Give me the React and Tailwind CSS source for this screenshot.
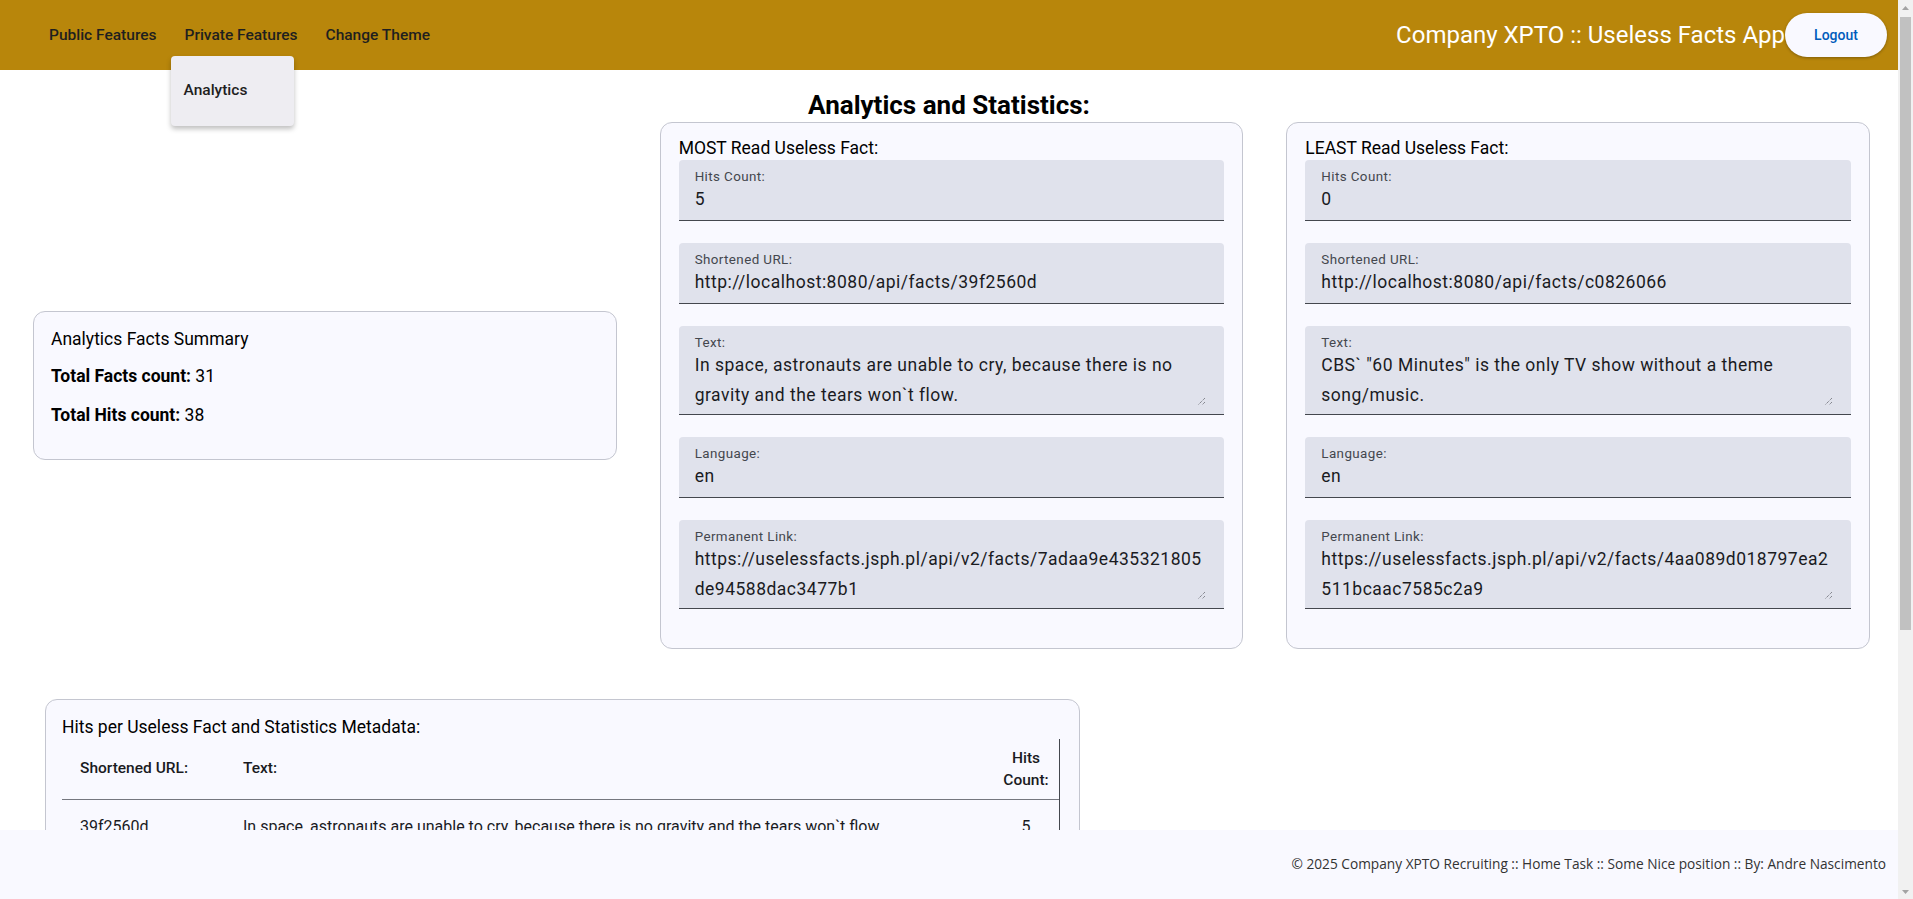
import React from 'react';

const mostRead = {
  hits: '5',
  url: 'http://localhost:8080/api/facts/39f2560d',
  text: ['In space, astronauts are unable to cry, because there is no', 'gravity and the tears won`t flow.'],
  language: 'en',
  link: ['https://uselessfacts.jsph.pl/api/v2/facts/7adaa9e435321805', 'de94588dac3477b1'],
};

const leastRead = {
  hits: '0',
  url: 'http://localhost:8080/api/facts/c0826066',
  text: ['CBS` "60 Minutes" is the only TV show without a theme', 'song/music.'],
  language: 'en',
  link: ['https://uselessfacts.jsph.pl/api/v2/facts/4aa089d018797ea2', '511bcaac7585c2a9'],
};

const rows = [
  { id: '39f2560d', text: 'In space, astronauts are unable to cry, because there is no gravity and the tears won`t flow.', hits: 5 },
  { id: 'c0826066', text: 'CBS` "60 Minutes" is the only TV show without a theme song/music.', hits: 0 },
];

// small diagonal grip drawn by textareas
const ResizeGrip = () => (
  <svg className="absolute bottom-[8px] right-[18px]" width="9" height="9" viewBox="0 0 9 9">
    <path d="M8 1 L1 8 M8 5 L5 8" stroke="#5f6068" strokeWidth="1" strokeDasharray="1 1" />
  </svg>
);

const Field = ({ label, lines, multiline }) => (
  <div className="mb-[22px]">
    <div
      className={`relative overflow-hidden rounded-t-[4px] bg-[#e0e2ec] border-b border-[#44474e] px-4 ${
        multiline ? 'h-[89px]' : 'h-[61px]'
      }`}
    >
      <div className="mt-[9px] text-[13.4px] leading-[16px] tracking-[0.4px] text-[#44474e]">{label}</div>
      {multiline ? (
        <div className="-mt-[1px] text-[17.5px] leading-[30px] tracking-[0.5px] text-[#1a1b1f]">
          {lines.map((l) => (
            <div key={l} className="whitespace-nowrap">{l}</div>
          ))}
        </div>
      ) : (
        <div className="mt-[2px] text-[17.5px] leading-[24px] tracking-[0.5px] text-[#1a1b1f] whitespace-nowrap">{lines}</div>
      )}
      {multiline && <ResizeGrip />}
    </div>
  </div>
);

const FactCard = ({ title, fact }) => (
  <div className="border border-[#c4c6d0] rounded-[12px] bg-[#f9f9ff] pt-[13px] px-[18px] pb-[17px]">
    <div className="text-[17.5px] leading-6 text-black">{title}</div>
    <Field label="Hits Count:" lines={fact.hits} />
    <Field label="Shortened URL:" lines={fact.url} />
    <Field label="Text:" lines={fact.text} multiline />
    <Field label="Language:" lines={fact.language} />
    <Field label="Permanent Link:" lines={fact.link} multiline />
  </div>
);

const Scrollbar = () => (
  <div className="w-[15px] h-full shrink-0 bg-[#f1f1f1] flex flex-col items-center">
    <div className="h-[15px] w-full flex items-center justify-center">
      <svg width="7" height="4" viewBox="0 0 7 4"><path d="M0 4 L3.5 0 L7 4 Z" fill="#a3a3a3" /></svg>
    </div>
    <div className="w-[11px] h-[613px] mt-[2px] bg-[#c1c1c1]" />
    <div className="flex-1" />
    <div className="h-[15px] w-full flex items-center justify-center">
      <svg width="7" height="4" viewBox="0 0 7 4"><path d="M0 0 L3.5 4 L7 0 Z" fill="#a3a3a3" /></svg>
    </div>
  </div>
);

export default function App() {
  return (
    <div className="flex h-screen w-full overflow-hidden bg-white" style={{ fontFamily: 'Roboto, "Liberation Sans", sans-serif' }}>
      <div className="flex-1 min-w-0 flex flex-col">
        {/* Toolbar */}
        <header className="relative z-10 h-[70px] shrink-0 bg-[#b8860b] flex items-center pl-[35px] pr-[11px]">
          <nav className="mt-[2px] flex items-center text-[15.5px] font-medium text-[#1f1f1f]">
            <button className="px-[14px] h-[36px]">Public Features</button>
            <div className="relative">
              <button className="px-[14px] h-[36px]">Private Features</button>
              <div className="absolute left-0 top-[38px] w-[123px] h-[70px] rounded-[4px] bg-[#eeedf2] shadow-[0_3px_5px_rgba(0,0,0,0.25)] flex items-center px-[13px]">
                Analytics
              </div>
            </div>
            <button className="px-[14px] h-[36px]">Change Theme</button>
          </nav>
          <div className="ml-auto flex items-center">
            <span className="text-[24px] leading-8 text-white">Company XPTO :: Useless Facts App</span>
            <button className="w-[102px] h-[44px] rounded-full bg-[#f9f9ff] text-[#005cbb] text-[14px] font-medium shadow-[0_1px_3px_rgba(0,0,0,0.3)]">
              Logout
            </button>
          </div>
        </header>

        {/* Content */}
        <main className="flex-1 overflow-hidden pt-[19px]">
          <h2 className="text-[26px] leading-[32px] font-bold text-center text-black">Analytics and Statistics:</h2>
          <div className="mt-[1px] grid grid-cols-3 gap-x-[43px] pl-[33px] pr-[28px] items-center">
            <div className="border border-[#c4c6d0] rounded-[12px] bg-[#f9f9ff] pt-[15px] px-[17px] pb-[32px] text-[17.5px] leading-6 text-black">
              <div>Analytics Facts Summary</div>
              <p className="mt-[13px]"><b>Total Facts count:</b> 31</p>
              <p className="mt-[15px]"><b>Total Hits count:</b> 38</p>
            </div>
            <FactCard title="MOST Read Useless Fact:" fact={mostRead} />
            <FactCard title="LEAST Read Useless Fact:" fact={leastRead} />
          </div>

          <div className="mt-[50px] ml-[45px] w-[1035px] border border-[#c4c6d0] rounded-[12px] bg-[#f9f9ff] pt-[15px] pl-[16px] pr-[19px] pb-4">
            <div className="text-[17.5px] leading-6 text-black">Hits per Useless Fact and Statistics Metadata:</div>
            <div className="border-r border-[#44474e]">
              <table className="w-full border-collapse text-[#1a1b1f]">
                <thead className="text-[15.5px]">
                  <tr className="h-[60px] border-b border-[#75777f]">
                    <th className="w-[165px] pl-[18px] text-left font-medium">Shortened URL:</th>
                    <th className="pl-[16px] text-left font-medium">Text:</th>
                    <th className="w-[66px] text-center font-medium leading-[22px]">Hits<br />Count:</th>
                  </tr>
                </thead>
                <tbody className="text-[16px]">
                  {rows.map((r) => (
                    <tr key={r.id} className="h-[56px] border-b border-[#c4c6d0]">
                      <td className="pl-[18px]">{r.id}</td>
                      <td className="pl-[16px]">{r.text}</td>
                      <td className="text-center">{r.hits}</td>
                    </tr>
                  ))}
                </tbody>
              </table>
            </div>
          </div>
        </main>

        {/* Footer */}
        <footer
          className="h-[69px] shrink-0 bg-[#f9f9ff] flex items-center justify-end pr-[12px] text-[13.7px] text-[#333]"
          style={{ fontFamily: '"Open Sans", "Noto Sans", sans-serif' }}
        >
          © 2025 Company XPTO Recruiting :: Home Task :: Some Nice position :: By: Andre Nascimento
        </footer>
      </div>
      <Scrollbar />
    </div>
  );
}
